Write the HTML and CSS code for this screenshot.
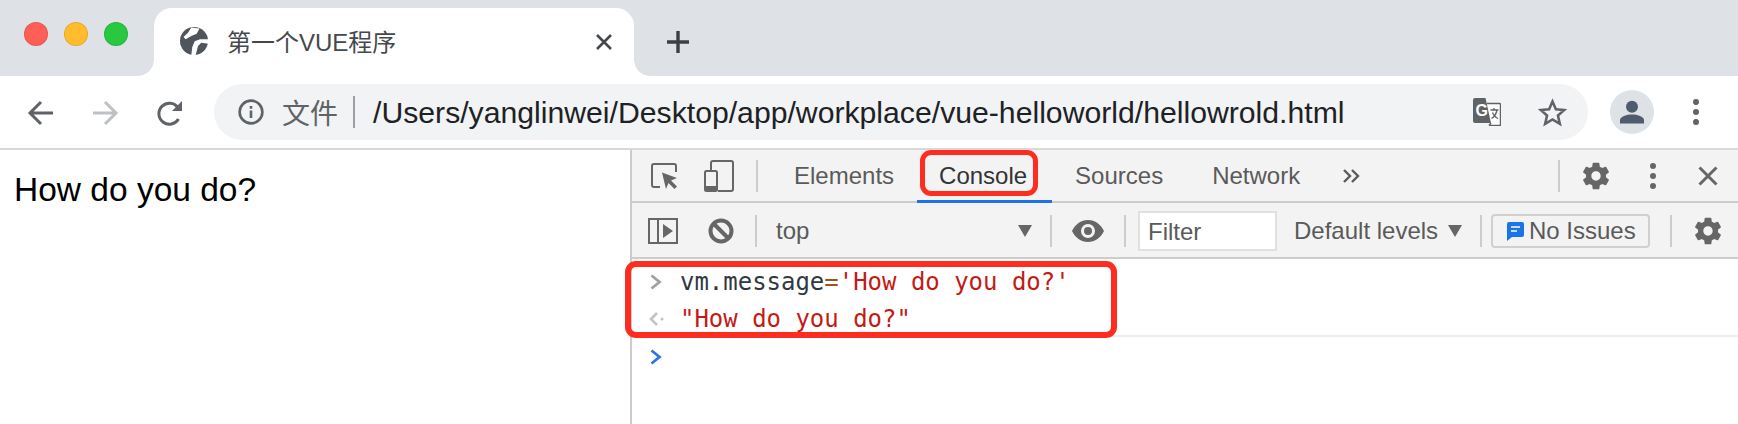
FILE: index.html
```html
<!DOCTYPE html>
<html lang="zh">
<head>
<meta charset="utf-8">
<title>第一个VUE程序</title>
<link rel="stylesheet" href="styles.css">
</head>
<body>
<div class="window">
  <header class="tabstrip">
    <div class="lights"><span class="light red"></span><span class="light yellow"></span><span class="light green"></span></div>
    <div class="tab">
      <svg class="globe" viewBox="-1 -1 30 30"><circle cx="14" cy="14" r="14" fill="#50555b"/><path fill="#fff" d="M11.300 .5L19.500 1.500 16.700 6.700 11.300 9 5.700 12.300 3.500 10 8 5.700zM28.500 12.300V16.700L21.300 15.700 18 19 15.700 28H11.300L12.300 20 14.700 14.300 20 12.300z"/></svg>
      <span class="tab-title">第一个VUE程序</span>
      <svg class="tab-close" viewBox="0 0 18 18"><path d="M2 2l14 14M16 2L2 16" stroke="#45494e" stroke-width="2.600" fill="none"/></svg>
    </div>
    <svg class="newtab" viewBox="0 0 24 24"><path d="M12 1v22M1 12h22" stroke="#3c4043" stroke-width="3.400" fill="none"/></svg>
  </header>

  <nav class="toolbar">
    <svg class="nav back" viewBox="0 0 28 28"><path d="M26 14H4M14 3L3 14l11 11" stroke="#5f6368" stroke-width="3" fill="none"/></svg>
    <svg class="nav forward" viewBox="0 0 28 28"><path d="M2 14h22M14 3l11 11-11 11" stroke="#bdc1c6" stroke-width="3" fill="none"/></svg>
    <svg class="nav reload" viewBox="0 0 28 28"><path d="M22.500 20a10.500 10.500 0 1 1-.6-11.500" stroke="#5f6368" stroke-width="3" fill="none"/><path d="M26 2v10H16z" fill="#5f6368"/></svg>
    <div class="omnibox">
      <svg class="info" viewBox="0 0 24 24"><circle cx="12" cy="12" r="10.500" stroke="#5f6368" stroke-width="2.400" fill="none"/><path d="M10.800 10.500h2.400v7h-2.400zM10.800 6.500h2.400v2.400h-2.400z" fill="#5f6368"/></svg>
      <span class="scheme">文件</span>
      <span class="omni-sep"></span>
      <span class="url">/Users/yanglinwei/Desktop/app/workplace/vue-helloworld/hellowrold.html</span>
      <svg class="translate" viewBox="0 0 28 28"><path d="M14 5.500h12.500a1 1 0 0 1 1 1v20a1 1 0 0 1-1 1H16" fill="#fff" stroke="#5f6368" stroke-width="1.500"/><path fill="#5f6368" d="M2 0h10.500l5.500 25H2a2 2 0 0 1-2-2V2a2 2 0 0 1 2-2z"/><path d="M18 25l-2 2.500" stroke="#5f6368" stroke-width="1.500"/><path d="M17.500 12h8M21 10v2M24 12c-.8 4-3 7-5.500 8.500M19.500 14.500c1 2.500 3 5 5.500 6" stroke="#5f6368" stroke-width="1.300" fill="none"/><text class="g" x="2.500" y="18">G</text></svg>
      <svg class="star" viewBox="0 0 24 24"><path d="M12 2.800l2.800 6.500 7 .6-5.300 4.600 1.600 6.900-6.100-3.700-6.100 3.700 1.600-6.900-5.300-4.600 7-.6z" fill="none" stroke="#5f6368" stroke-width="2.100" stroke-linejoin="miter"/></svg>
    </div>
    <div class="avatar"><svg viewBox="0 0 26 26"><circle cx="13" cy="7.700" r="6" fill="#4f5b6e"/><path d="M1 24.500V21c0-3.500 7-5.500 12-5.500s12 2 12 5.500v3.500z" fill="#4f5b6e"/></svg></div>
    <svg class="menu" viewBox="0 0 8 28"><circle cx="4" cy="4" r="3" fill="#5f6368"/><circle cx="4" cy="14" r="3" fill="#5f6368"/><circle cx="4" cy="24" r="3" fill="#5f6368"/></svg>
  </nav>

  <main class="content">
    <section class="page">How do you do?</section>
    <section class="devtools">
      <div class="dt-tabs">
        <svg class="ic-inspect" viewBox="0 0 27 26"><path d="M9 24H3a2 2 0 0 1-2-2V3a2 2 0 0 1 2-2h20a2 2 0 0 1 2 2v6" fill="none" stroke="#666" stroke-width="2"/><path d="M11 9.500l15 5.500-6 2.500 6 6-2.500 2.500-6-6-2.500 6z" fill="#666"/></svg>
        <svg class="ic-device" viewBox="0 0 30 32"><path d="M7 10V3a2 2 0 0 1 2-2h18a2 2 0 0 1 2 2v26a2 2 0 0 1-2 2h-13" fill="none" stroke="#666" stroke-width="2"/><rect x="1" y="11" width="12" height="20" rx="1.500" fill="none" stroke="#666" stroke-width="2"/><rect x="1" y="26" width="12" height="5" fill="#666"/></svg>
        <span class="sep sep-a"></span>
        <span class="dt-tab elements">Elements</span>
        <span class="dt-tab console active">Console</span>
        <span class="dt-tab sources">Sources</span>
        <span class="dt-tab network">Network</span>
        <svg class="more" viewBox="0 0 18 16"><path d="M2 2l6 6-6 6M10 2l6 6-6 6" fill="none" stroke="#5a5a5a" stroke-width="2.400"/></svg>
        <span class="sep sep-b"></span>
        <svg class="gear" viewBox="0 0 24 24"><path fill="#666" d="M19.430 12.980c.04-.32.07-.64.07-.98s-.03-.66-.07-.98l2.110-1.650c.19-.15.24-.42.12-.64l-2-3.460c-.12-.22-.39-.3-.61-.22l-2.490 1c-.52-.4-1.080-.73-1.690-.98l-.38-2.650C14.460 2.180 14.250 2 14 2h-4c-.25 0-.46.18-.49.42l-.38 2.650c-.61.25-1.170.59-1.690.98l-2.490-1c-.23-.09-.49 0-.61.22l-2 3.460c-.13.22-.07.49.12.64l2.110 1.650c-.04.32-.07.65-.07.98s.03.66.07.98l-2.110 1.650c-.19.15-.24.42-.12.64l2 3.460c.12.22.39.3.61.22l2.490-1c.52.4 1.080.73 1.690.98l.38 2.650c.03.24.24.42.49.42h4c.25 0 .46-.18.49-.42l.38-2.650c.61-.25 1.170-.59 1.690-.98l2.490 1c.23.09.49 0 .61-.22l2-3.460c.12-.22.07-.49-.12-.64l-2.110-1.650zM12 15.500c-1.930 0-3.500-1.570-3.500-3.500s1.570-3.500 3.500-3.500 3.500 1.570 3.500 3.500-1.570 3.500-3.500 3.500z"/></svg>
        <svg class="dt-dots" viewBox="0 0 8 28"><circle cx="4" cy="4" r="3" fill="#666"/><circle cx="4" cy="14" r="3" fill="#666"/><circle cx="4" cy="24" r="3" fill="#666"/></svg>
        <svg class="dt-close" viewBox="0 0 20 20"><path d="M1.500 1.500l17 17M18.500 1.500l-17 17" stroke="#666" stroke-width="3" fill="none"/></svg>
      </div>
      <div class="dt-filter">
        <svg class="ic-sidebar" viewBox="0 0 30 26"><path d="M1 1h28v24H1zM10 1v24" fill="none" stroke="#666" stroke-width="2"/><path d="M15 6l10 7-10 7z" fill="#666"/></svg>
        <svg class="ic-block" viewBox="0 0 26 26"><circle cx="13" cy="13" r="10.500" fill="none" stroke="#666" stroke-width="4"/><path d="M6 6l14 14" stroke="#666" stroke-width="4"/></svg>
        <span class="sep sep-c"></span>
        <span class="context">top</span>
        <span class="tri tri-a"></span>
        <span class="sep sep-d"></span>
        <svg class="ic-eye" viewBox="0 0 32 22"><path fill="#666" fill-rule="evenodd" d="M16 0C9 0 3 4.500 0 11c3 6.500 9 11 16 11s13-4.500 16-11C29 4.500 23 0 16 0zm0 18a7 7 0 1 1 0-14 7 7 0 0 1 0 14zm0-3a4 4 0 1 0 0-8 4 4 0 0 0 0 8z"/></svg>
        <span class="sep sep-e"></span>
        <span class="filter-box">Filter</span>
        <span class="levels">Default levels</span>
        <span class="tri tri-b"></span>
        <span class="sep sep-f"></span>
        <span class="issues"><svg viewBox="0 0 17 20"><path fill="#1a73e8" d="M2 1h13a2 2 0 0 1 2 2v11a2 2 0 0 1-2 2H5l-5 4V3a2 2 0 0 1 2-2z"/><path d="M4 6h9M4 10h6" stroke="#fff" stroke-width="1.600"/></svg>No Issues</span>
        <span class="sep sep-g"></span>
        <svg class="gear gear-b" viewBox="0 0 24 24"><path fill="#666" d="M19.430 12.980c.04-.32.07-.64.07-.98s-.03-.66-.07-.98l2.110-1.650c.19-.15.24-.42.12-.64l-2-3.460c-.12-.22-.39-.3-.61-.22l-2.490 1c-.52-.4-1.080-.73-1.690-.98l-.38-2.650C14.460 2.180 14.250 2 14 2h-4c-.25 0-.46.18-.49.42l-.38 2.650c-.61.25-1.170.59-1.690.98l-2.490-1c-.23-.09-.49 0-.61.22l-2 3.460c-.13.22-.07.49.12.64l2.110 1.650c-.04.32-.07.65-.07.98s.03.66.07.98l-2.110 1.650c-.19.15-.24.42-.12.64l2 3.460c.12.22.39.3.61.22l2.490-1c.52.4 1.080.73 1.690.98l.38 2.650c.03.24.24.42.49.42h4c.25 0 .46-.18.49-.42l.38-2.650c.61-.25 1.170-.59 1.690-.98l2.490 1c.23.09.49 0 .61-.22l2-3.460c.12-.22.07-.49-.12-.64l-2.110-1.650zM12 15.500c-1.930 0-3.500-1.570-3.500-3.500s1.570-3.500 3.500-3.500 3.500 1.570 3.500 3.500-1.570 3.500-3.500 3.500z"/></svg>
      </div>
      <div class="console-out">
        <div class="line line-in">
          <svg class="chev" viewBox="0 0 12 16"><path d="M1.500 1.500l8 6.500-8 6.500" fill="none" stroke="#a0a0a0" stroke-width="2.800"/></svg>
          <code><span class="tk-var">vm.message</span><span class="tk-op">=</span><span class="tk-str">'How do you do?'</span></code>
        </div>
        <div class="line line-out">
          <svg class="chev-out" viewBox="0 0 16 16"><path d="M8 2L2 8l6 6" fill="none" stroke="#c4c4c4" stroke-width="2.600"/><circle cx="13" cy="8" r="1.600" fill="#c4c4c4"/></svg>
          <code class="tk-str">"How do you do?"</code>
        </div>
        <div class="line line-prompt">
          <svg class="chev" viewBox="0 0 12 16"><path d="M1.500 1.500l8 6.500-8 6.500" fill="none" stroke="#2f74e8" stroke-width="2.800"/></svg>
        </div>
      </div>
    </section>
  </main>
  <div class="mark mark-tab"></div>
  <div class="mark mark-console"></div>
</div>
</body>
</html>
```

FILE: styles.css
```css
* { box-sizing: border-box; }
html, body { margin: 0; padding: 0; background: #fff; }
body { font-family: "Liberation Sans", Arial, "Noto Sans CJK SC", sans-serif; overflow: hidden; }
svg { display: block; flex: none; }
.window { position: relative; width: 1738px; height: 424px; overflow: hidden; }

/* tab strip */
.tabstrip { height: 76px; background: #dee1e6; display: flex; align-items: flex-start; }
.lights { display: flex; gap: 16px; width: 154px; padding: 22px 0 0 24px; flex: none; }
.light { width: 24px; height: 24px; border-radius: 50%; border: 1px solid rgba(0,0,0,.1); }
.red { background: #ff5f57; }
.yellow { background: #ffbd2e; }
.green { background: #28c940; }
.tab { position: relative; margin-top: 8px; width: 480px; height: 68px; background: #fff; border-radius: 18px 18px 0 0; display: flex; align-items: center; padding-left: 25px; }
.tab::before, .tab::after { content: ""; position: absolute; bottom: 0; width: 16px; height: 16px; }
.tab::before { left: -16px; background: radial-gradient(circle at 0 0, #dee1e6 15.500px, #fff 16px); }
.tab::after { right: -16px; background: radial-gradient(circle at 100% 0, #dee1e6 15.500px, #fff 16px); }
.globe { width: 30px; height: 30px; margin-top: -2px; }
.tab-title { margin-left: 18px; margin-top: -3px; font-size: 24px; color: #45494e; }
.tab-close { width: 18px; height: 18px; position: absolute; right: 21px; top: 25px; }
.newtab { width: 24px; height: 24px; margin: 30px 0 0 32px; }

/* browser toolbar */
.toolbar { height: 72px; display: flex; align-items: center; }
.nav { width: 28px; height: 28px; margin-top: 2px; }
.back { margin-left: 27px; }
.forward { margin-left: 36px; }
.reload { margin-left: 37px; }
.omnibox { margin-left: 30px; width: 1374px; height: 56px; border-radius: 28px; background: #f1f3f4; display: flex; align-items: center; padding-left: 24px; flex: none; }
.info { width: 26px; height: 26px; }
.scheme { font-size: 28px; color: #5f6368; margin-left: 18px; font-family: "Noto Sans CJK SC", sans-serif; line-height: 1; }
.omni-sep { width: 2px; height: 32px; background: #9aa0a6; margin-left: 15px; }
.url { font-size: 30.200px; color: #202124; margin: 1px 0 0 18px; white-space: nowrap; width: 1100px; flex: none; }
.translate { width: 28px; height: 28px; }
.g { font: bold 16px "Liberation Sans", sans-serif; fill: #fff; }
.star { width: 29px; height: 29px; margin-left: 37px; }
.avatar { width: 44px; height: 44px; border-radius: 50%; background: #dee1e6; margin-left: 22px; display: flex; align-items: center; justify-content: center; }
.avatar svg { width: 26px; height: 26px; }
.menu { width: 8px; height: 28px; margin-left: 38px; }

/* content */
.content { height: 276px; display: flex; border-top: 2px solid #d7d8da; }
.page { width: 630px; flex: none; padding: 20px 0 0 14px; font-size: 33.500px; color: #000; line-height: 40px; }
.devtools { flex: 1; border-left: 2px solid #ccc; min-width: 0; font-size: 24px; color: #5a5a5a; }
.dt-tabs { height: 53px; background: #f3f3f3; border-bottom: 2px solid #ccc; display: flex; align-items: center; position: relative; }
.dt-filter { height: 56px; padding-top: 2px; background: #f3f3f3; border-bottom: 2px solid #ccc; display: flex; align-items: center; }
.sep { width: 2px; height: 32px; background: #ccc; flex: none; }
.ic-inspect { width: 27px; height: 26px; margin-left: 19px; }
.ic-device { width: 30px; height: 32px; margin-left: 26px; }
.sep-a { margin-left: 22px; }
.dt-tab { height: 51px; line-height: 52px; flex: none; white-space: nowrap; }
.elements { margin-left: 36px; }
.console { margin-left: 23px; padding: 0 25px 0 22px; position: relative; color: #333; }
.console::after { content: ""; position: absolute; left: 0; right: 0; bottom: -2px; height: 3px; background: #1a73e8; }
.sources { margin-left: 23px; }
.network { margin-left: 49px; }
.more { width: 18px; height: 16px; margin-left: 42px; }
.sep-b { position: absolute; left: 926px; }
.gear { width: 32px; height: 32px; }
.dt-tabs .gear { position: absolute; left: 948px; }
.dt-dots { width: 8px; height: 28px; position: absolute; left: 1017px; }
.dt-close { width: 20px; height: 20px; position: absolute; left: 1066px; }

.ic-sidebar { width: 30px; height: 26px; margin-left: 16px; }
.ic-block { width: 26px; height: 26px; margin-left: 30px; }
.sep-c { margin-left: 21px; }
.context { margin-left: 19px; width: 242px; flex: none; }
.tri { width: 0; height: 0; border-left: 7px solid transparent; border-right: 7px solid transparent; border-top: 12px solid #666; flex: none; }
.sep-d { margin-left: 18px; }
.ic-eye { width: 32px; height: 22px; margin-left: 20px; }
.sep-e { margin-left: 20px; }
.filter-box { width: 139px; height: 40px; margin-left: 12px; background: #fff; border: 2px solid #e0e0e0; padding-left: 8px; line-height: 38px; flex: none; }
.levels { margin-left: 17px; white-space: nowrap; width: 154px; flex: none; }
.sep-f { margin-left: 18px; }
.issues { margin-left: 9px; width: 159px; height: 34px; border: 2px solid #d0d0d0; border-radius: 4px; display: flex; align-items: center; padding-left: 14px; gap: 5px; white-space: nowrap; flex: none; }
.issues svg { width: 17px; height: 20px; }
.sep-g { margin-left: 20px; }
.gear-b { margin-left: 20px; }

/* console */
.console-out { font-family: "DejaVu Sans Mono", monospace; font-size: 23.970px; background: #fff; }
.console-out code { font: inherit; white-space: pre; }
.line { display: flex; align-items: center; height: 38px; padding-left: 48px; position: relative; }
.line svg { position: absolute; }
.chev { width: 12px; height: 16px; left: 18px; }
.chev-out { width: 16px; height: 16px; left: 17px; }
.line-in { margin-top: 2px; padding-top: 4px; }
.line-out { padding-top: 4px; border-bottom: 2px solid #eee; }
.line-prompt { padding-top: 2px; }
.tk-var { color: #303942; }
.tk-op { color: #a0521c; }
.tk-str { color: #c41a16; }

/* red annotation frames */
.mark { position: absolute; border: 5px solid #ff2d20; border-radius: 11px; pointer-events: none; }
.mark-tab { left: 920px; top: 150px; width: 118px; height: 46px; }
.mark-console { left: 625px; top: 261px; width: 492px; height: 77px; border-width: 6px; }
```
